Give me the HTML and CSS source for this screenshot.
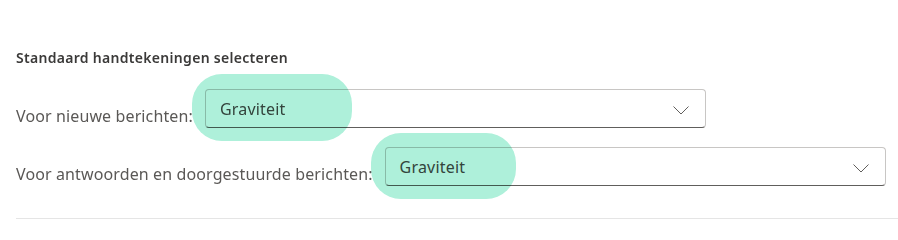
FILE: index.html
```html
<!DOCTYPE html>
<html lang="nl">
<head>
    <meta charset="UTF-8">
    <meta name="viewport" content="width=device-width, initial-scale=1.0">
    <title>Handtekeningen</title>
    <link rel="stylesheet" href="styles.css">
</head>
<body>
    <div class="signatures">
        <h3 class="section-title">Standaard handtekeningen selecteren</h3>
        <div class="row">
            <label class="row-label">Voor nieuwe berichten:</label>
            <div class="dropdown">
                <span class="mark mark-new"></span>
                <span class="dropdown-value">Graviteit</span>
                <svg class="chevron" width="16" height="9" viewBox="0 0 16 9"><polyline points="0.5,0.5 8,8 15.5,0.5" fill="none" stroke="#605e5c" stroke-width="1"/></svg>
            </div>
        </div>
        <div class="row">
            <label class="row-label">Voor antwoorden en doorgestuurde berichten:</label>
            <div class="dropdown">
                <span class="mark mark-reply"></span>
                <span class="dropdown-value">Graviteit</span>
                <svg class="chevron" width="16" height="9" viewBox="0 0 16 9"><polyline points="0.5,0.5 8,8 15.5,0.5" fill="none" stroke="#605e5c" stroke-width="1"/></svg>
            </div>
        </div>
        <div class="divider"></div>
    </div>
</body>
</html>
```

FILE: styles.css
```css
body {
    margin: 0;
    padding: 0;
    background-color: #ffffff;
    font-family: "Noto Sans", "Open Sans", sans-serif;
}
.signatures {
    padding: 48px 0 0 16px;
}
.section-title {
    margin: 0 0 21px 0;
    font-size: 14px;
    letter-spacing: 0.3px;
    line-height: 20px;
    font-weight: 600;
    color: #3b3a39;
}
.row {
    display: flex;
    align-items: flex-end;
    gap: 12px;
    margin-bottom: 19px;
}
.row-label {
    font-size: 16px;
    letter-spacing: 0.12px;
    line-height: 20px;
    color: #5a5856;
    padding-bottom: 2px;
}
.dropdown {
    position: relative;
    box-sizing: border-box;
    width: 501px;
    height: 39px;
    display: flex;
    align-items: center;
    justify-content: space-between;
    padding: 0 16px 0 14px;
    border: 1px solid #c8c6c4;
    border-bottom-color: #605e5c;
    border-radius: 4px;
    background-color: #ffffff;
}
.dropdown-value {
    font-size: 16px;
    letter-spacing: 0.2px;
    color: #4a4846;
}
.chevron {
    display: block;
    margin-top: 4px;
}
.mark {
    position: absolute;
    background-color: #aef0da;
    mix-blend-mode: multiply;
    border-radius: 30px;
}
.mark-new {
    left: -14px;
    top: -16px;
    width: 160px;
    height: 67px;
}
.mark-reply {
    left: -15px;
    top: -15px;
    width: 145px;
    height: 66px;
}
.divider {
    height: 1px;
    background-color: #e5e5e5;
    margin-top: 32px;
}
```
